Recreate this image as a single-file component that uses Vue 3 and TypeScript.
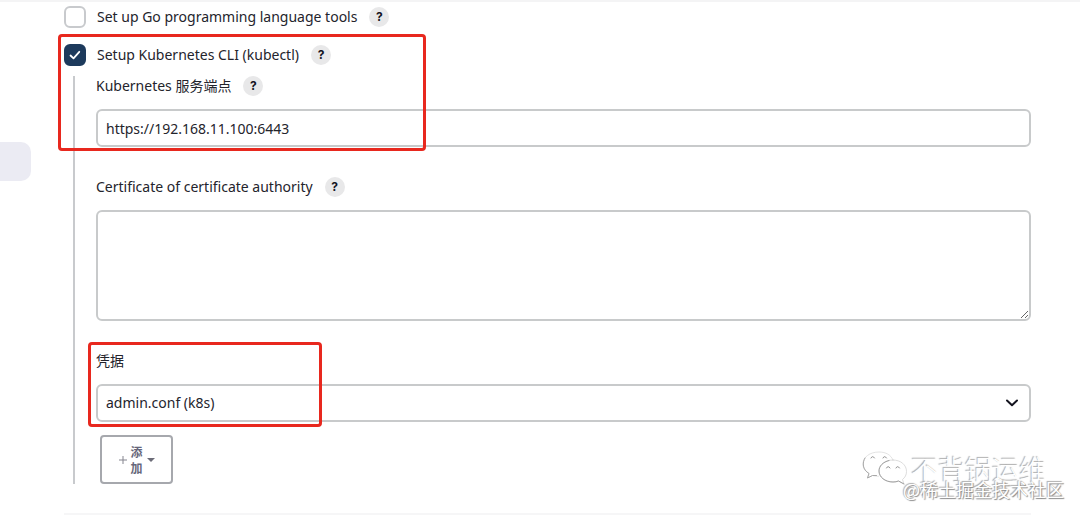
<script setup lang="ts">
import { ref } from 'vue'

const goTools = ref(false)
const kubectl = ref(true)
const endpoint = ref('https://192.168.11.100:6443')
const certificate = ref('')
const credential = ref('admin.conf (k8s)')
</script>

<template>
  <div class="page">
    <aside class="side"><div class="side-active"></div></aside>

    <main class="content">
      <div class="option">
        <input id="go-tools" v-model="goTools" type="checkbox" class="check" />
        <label for="go-tools">Set up Go programming language tools</label>
        <button type="button" class="help">?</button>
      </div>
      <div class="option">
        <input id="kubectl" v-model="kubectl" type="checkbox" class="check" />
        <label for="kubectl">Setup Kubernetes CLI (kubectl)</label>
        <button type="button" class="help">?</button>
      </div>

      <section class="nested">
        <div class="field">
          <div class="caption">
            <label for="endpoint">Kubernetes 服务端点</label>
            <button type="button" class="help">?</button>
          </div>
          <input id="endpoint" v-model="endpoint" type="text" class="control" />
        </div>
        <div class="field">
          <div class="caption">
            <label for="certificate">Certificate of certificate authority</label>
            <button type="button" class="help">?</button>
          </div>
          <textarea id="certificate" v-model="certificate" class="control area"></textarea>
        </div>
        <div class="field">
          <div class="caption"><label for="credential">凭据</label></div>
          <div class="select-wrap">
            <select id="credential" v-model="credential" class="control">
              <option>admin.conf (k8s)</option>
            </select>
            <svg class="chevron" width="14" height="8" viewBox="0 0 14 8" aria-hidden="true">
              <path d="M2 1.5 7 6.2 12 1.5" fill="none" stroke="#14141f" stroke-width="2" stroke-linecap="round" stroke-linejoin="round" />
            </svg>
          </div>
          <button type="button" class="add">
            <svg width="8" height="8" viewBox="0 0 8 8" aria-hidden="true">
              <path d="M4 0V8M0 4H8" stroke="#85858f" stroke-width="1" />
            </svg>
            <span class="add-text">添加</span>
            <svg width="8" height="4" viewBox="0 0 8 4" aria-hidden="true">
              <path d="M0 0H8L4 4Z" fill="#6c6c78" />
            </svg>
          </button>
        </div>
      </section>
      <hr class="rule" />
    </main>

    <div class="frame frame-server"></div>
    <div class="frame frame-credential"></div>

    <div class="mark">
      <svg class="mark-logo" width="46" height="36" viewBox="0 0 46 36" aria-hidden="true">
        <g fill="#fff" stroke-linecap="round">
          <path d="M31 9C29 4 24 1 17 1 8 1 1 6 1 13c0 4 2 7 6 9.500L5.500 27l5-2.500c2 .5 4 .8 6 .8" stroke="#dcdcdc" stroke-width=".8" />
          <path d="M3 7c-3 5-2.500 11.500 4 15.500L5.500 27l5-2.500h4" fill="none" stroke="#a8a8a8" />
          <path d="M31 9c-8 0-14 5-14 11s6 11 14 11c2 0 4-.3 5.500-1l5.500 3-1.500-4.500C43 26.500 44.500 24 44.500 20.500 44.500 14 39 9 31 9Z" stroke="#d4d4d4" stroke-width=".8" />
          <path d="M27 9.500c-6 1.500-10 5.500-10 10.500 0 6 6 11 14 11 2 0 4-.3 5.500-1l5.500 3" fill="none" stroke="#a0a0a0" />
          <path d="M9 7q1.500-3 3.500 0M21 7q1.500-3 3.500 0M24.500 17q1.500-3 3.500 0M34 17q1.500-3 3.500 0" fill="none" stroke="#909090" />
        </g>
      </svg>
      <span class="mark-name">不背锅运维</span>
      <span class="mark-site">@稀土掘金技术社区</span>
    </div>
  </div>
</template>

<style>
body {
  margin: 0;
  background: #fff;
}
</style>

<style scoped>
.page {
  position: relative;
  display: flex;
  min-height: 517px;
  box-sizing: border-box;
  border-top: 2px solid #f4f4f5;
  overflow: hidden;
  color: #24242c;
  font: 14px/20px "Noto Sans", "Noto Sans CJK SC", sans-serif;
}
.side {
  flex: 0 0 64px;
  padding-top: 140px;
}
.side-active {
  width: 31px;
  height: 39px;
  border-radius: 0 10px 10px 0;
  background: #ebebf3;
}
.content {
  flex: 1;
  min-width: 0;
  margin-right: 49px;
  padding-top: 4px;
}
.option {
  display: flex;
  align-items: center;
  height: 22px;
  margin-bottom: 16px;
}
.check {
  appearance: none;
  flex: none;
  width: 22px;
  height: 22px;
  margin: 0 11px 0 0;
  box-sizing: border-box;
  border: 2px solid #c8cacd;
  border-radius: 6px;
  background: #fff;
}
.check:checked {
  border-color: #1d3a5c;
  background: #1d3a5c url("data:image/svg+xml,%3Csvg xmlns='http://www.w3.org/2000/svg' viewBox='0 0 18 18'%3E%3Cpath d='M4.500 9.500 7.500 12.300 13.300 5.800' fill='none' stroke='white' stroke-width='1.800' stroke-linecap='round' stroke-linejoin='round'/%3E%3C/svg%3E") center / 18px no-repeat;
}
.help {
  width: 20px;
  height: 20px;
  margin-left: 12px;
  padding: 0;
  border: 0;
  border-radius: 50%;
  background: #e8e8e9;
  color: #14141f;
  font: bold 12px/20px Inter, sans-serif;
}
.nested {
  margin: -6px 0 0 9px;
  padding-left: 21px;
  border-left: 2px solid #c8cacd;
}
.field + .field {
  margin-top: 30px;
}
.caption {
  display: flex;
  align-items: center;
  height: 20px;
  margin-bottom: 13px;
}
.control {
  display: block;
  width: 100%;
  height: 38px;
  box-sizing: border-box;
  margin: 0;
  padding: 0 8px;
  border: 2px solid #c8cacb;
  border-radius: 6px;
  background: #fff;
  color: inherit;
  font: inherit;
}
.area {
  height: 111px;
  padding: 8px;
  resize: vertical;
}
.select-wrap {
  position: relative;
}
select.control {
  appearance: none;
}
.chevron {
  position: absolute;
  top: 15px;
  right: 12px;
  pointer-events: none;
}
.add {
  display: flex;
  align-items: center;
  justify-content: center;
  gap: 4px;
  width: 73px;
  height: 49px;
  margin: 13px 0 0 4px;
  padding: 0;
  border: 2px solid #a6a8ad;
  border-radius: 4px;
  background: #fff;
  color: #66667a;
  font: bold 12px/16px "Noto Sans CJK SC", sans-serif;
}
.add-text {
  width: 12px;
}
.rule {
  height: 2px;
  margin: 29px 0 0;
  border: 0;
  background: #f6f6f7;
}
.frame {
  position: absolute;
  box-sizing: border-box;
  border: 3px solid #e8281e;
  border-radius: 4px;
  pointer-events: none;
}
.frame-server {
  top: 32px;
  left: 58px;
  width: 368px;
  height: 117px;
}
.frame-credential {
  top: 340px;
  left: 88px;
  width: 234px;
  height: 85px;
}
.mark {
  position: absolute;
  right: 16px;
  bottom: 12px;
  width: 202px;
  height: 54px;
  color: #fff;
  font-family: "Noto Sans CJK SC", sans-serif;
  white-space: nowrap;
  pointer-events: none;
}
.mark-logo {
  position: absolute;
  top: 0;
  left: 0;
}
.mark-name {
  position: absolute;
  top: 4px;
  right: 18px;
  font-size: 27px;
  font-weight: 300;
  line-height: 28px;
  text-shadow: -1px -1px 1px #aaa;
}
.mark-site {
  position: absolute;
  right: 0;
  bottom: 6px;
  font-size: 18px;
  line-height: 20px;
  text-shadow: 1px 1px 1px #888, -1px -1px 1px #aaa;
}
</style>
